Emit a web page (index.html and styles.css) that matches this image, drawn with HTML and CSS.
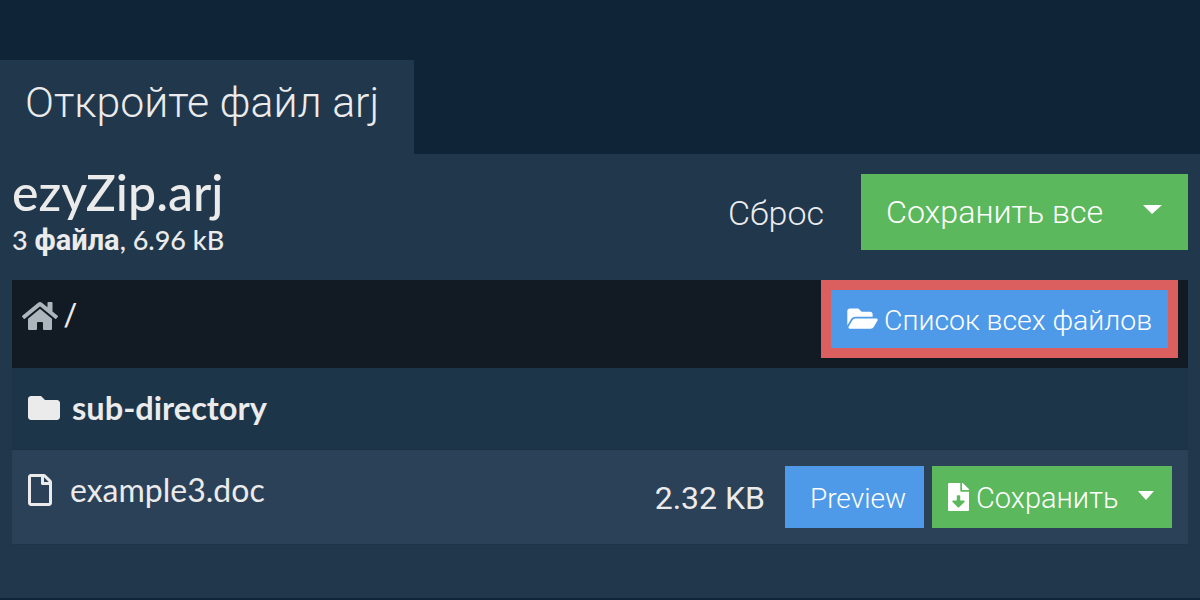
FILE: index.html
```html
<!DOCTYPE html>
<html lang="ru">

<head>
    <meta charset="UTF-8">
    <title>Откройте файл arj</title>
    <link rel="stylesheet" href="styles.css">
</head>

<body>
    <div class="tab">Откройте файл arj</div>
    <div class="panel">
        <div class="head">
            <div class="archive">
                <div class="archive_name">ezyZip.arj</div>
                <div class="archive_info">3 <span class="cyr">файла</span>, 6.96 kB</div>
            </div>
            <div class="head_actions">
                <span class="reset">Сброс</span>
                <div class="btn btn_green btn_save_all">
                    <span>Сохранить все</span>
                    <span class="caret caret_big"></span>
                </div>
            </div>
        </div>
        <div class="path_bar">
            <div class="path">
                <svg class="icon_home" viewBox="0 0 576 512">
                    <path fill="#adb5bd" d="M280.37 148.26L96 300.11V464a16 16 0 0 0 16 16l112.06-.29a16 16 0 0 0 15.92-16V368a16 16 0 0 1 16-16h64a16 16 0 0 1 16 16v95.64a16 16 0 0 0 16 16.05L464 480a16 16 0 0 0 16-16V300L295.67 148.26a12.19 12.19 0 0 0-15.3 0zM571.6 251.47L488 182.56V44.05a12 12 0 0 0-12-12h-56a12 12 0 0 0-12 12v72.61L318.47 43a48 48 0 0 0-61 0L4.34 251.47a12 12 0 0 0-1.6 16.9l25.5 31A12 12 0 0 0 45.15 301l235.22-193.74a12.19 12.19 0 0 1 15.3 0L530.9 301a12 12 0 0 0 16.9-1.6l25.5-31a12 12 0 0 0-1.7-16.93z" />
                </svg>
                <span class="slash">/</span>
            </div>
            <div class="list_outline">
                <div class="btn btn_blue btn_list">
                    <svg class="icon_open" viewBox="0 0 576 512">
                        <path fill="#fff" d="M572.694 292.093L500.27 416.248A63.997 63.997 0 0 1 444.989 448H45.025c-18.523 0-30.064-20.093-20.731-36.093l72.424-124.155A64 64 0 0 1 152 256h399.964c18.523 0 30.064 20.093 20.73 36.093zM152 224h328v-48c0-26.51-21.49-48-48-48H272l-64-64H48C21.49 64 0 85.49 0 112v278.046l69.077-118.418C86.214 242.25 117.989 224 152 224z" />
                    </svg>
                    <span>Список всех файлов</span>
                </div>
            </div>
        </div>
        <div class="folder_row">
            <svg class="icon_folder" viewBox="0 0 512 512">
                <path fill="#ebebeb" d="M464 128H272l-64-64H48C21.49 64 0 85.49 0 112v288c0 26.51 21.49 48 48 48h416c26.51 0 48-21.49 48-48V176c0-26.51-21.49-48-48-48z" />
            </svg>
            <span>sub-directory</span>
        </div>
        <div class="file_row">
            <div class="file_name">
                <svg class="icon_file" viewBox="0 0 384 512">
                    <path fill="#ebebeb" d="M369.9 97.9L286 14C277 5 264.8-.1 252.1-.1H48C21.5 0 0 21.5 0 48v416c0 26.5 21.5 48 48 48h288c26.5 0 48-21.5 48-48V131.9c0-12.7-5.1-25-14.1-34zM332.1 128H256V51.9l76.1 76.1zM48 464V48h160v104c0 13.3 10.7 24 24 24h104v288H48z" />
                </svg>
                <span>example3.doc</span>
            </div>
            <div class="file_actions">
                <span class="file_size">2.32 KB</span>
                <div class="btn btn_blue btn_preview">Preview</div>
                <div class="btn btn_green btn_save">
                    <svg class="icon_download" viewBox="0 0 384 512">
                        <path fill="#fff" d="M224 136V0H24C10.7 0 0 10.7 0 24v464c0 13.3 10.7 24 24 24h336c13.3 0 24-10.7 24-24V160H248c-13.2 0-24-10.8-24-24zm76.45 211.36l-96.42 95.7c-6.65 6.61-17.39 6.61-24.04 0l-96.42-95.7C73.42 337.29 80.54 320 94.82 320H160v-80c0-8.84 7.16-16 16-16h32c8.84 0 16 7.16 16 16v80h65.18c14.28 0 21.4 17.29 11.27 27.36zM377 105L279.1 7c-4.5-4.5-10.6-7-17-7H256v128h128v-6.1c0-6.3-2.5-12.4-7-16.9z" />
                    </svg>
                    <span>Сохранить</span>
                    <span class="caret"></span>
                </div>
            </div>
        </div>
    </div>
</body>

</html>
```

FILE: styles.css
```css
* {
    box-sizing: border-box;
}

html,
body {
    height: 100%;
}

body {
    margin: 0;
    overflow: hidden;
    padding-top: 60px;
    background: #0f2537;
    color: #ebebeb;
    font-family: Lato, Roboto, sans-serif;
}

.tab {
    width: 414px;
    height: 94px;
    padding: 17px 0 0 25px;
    background: #20374c;
    font-family: Roboto, sans-serif;
    font-size: 42.8px;
    font-weight: 300;
    line-height: 50px;
}

.panel {
    height: 444px;
    padding: 0 12px;
    background: #20374c;
}

.head {
    height: 126px;
    display: flex;
    justify-content: space-between;
}

.archive_name {
    padding-top: 11px;
    font-size: 50px;
    font-weight: 500;
    line-height: 54px;
}

.archive_info {
    margin-top: 6px;
    font-size: 27px;
    font-weight: 500;
    line-height: 30px;
}

.cyr {
    font-family: Roboto, sans-serif;
    font-size: 29px;
    font-weight: 700;
}

.head_actions {
    display: flex;
    align-items: flex-start;
    padding-top: 20px;
}

.reset {
    margin-right: 37px;
    font-family: Roboto, sans-serif;
    font-size: 34px;
    font-weight: 300;
    line-height: 78px;
}

.btn {
    display: flex;
    align-items: center;
    color: #fff;
    font-family: Roboto, sans-serif;
    font-weight: 300;
}

.btn_green {
    background: #5cb85c;
}

.btn_blue {
    background: #4e9ae8;
}

.btn_save_all {
    width: 327px;
    height: 76px;
    padding: 0 26px 0 25px;
    justify-content: space-between;
    font-size: 32.2px;
}

.caret {
    width: 0;
    height: 0;
    border-top: 9px solid #fff;
    border-left: 8px solid transparent;
    border-right: 8px solid transparent;
}

.caret_big {
    border-top-width: 9px;
    border-left-width: 9px;
    border-right-width: 10px;
    margin-top: -5px;
}

.path_bar {
    height: 88px;
    padding-right: 10px;
    display: flex;
    justify-content: space-between;
    background: #121a23;
}

.path {
    display: flex;
    align-items: flex-start;
    padding: 20px 0 0 10px;
    font-size: 32px;
    line-height: 28px;
}

.icon_home {
    width: 36px;
    height: 32px;
}

.slash {
    margin-left: 6px;
    font-family: Roboto, sans-serif;
    font-weight: 400;
}

.list_outline {
    height: 78px;
    padding: 10px;
    background: #dc5f5f;
}

.btn_list {
    width: 337px;
    height: 58px;
    padding: 2px 0 0 16px;
    font-size: 28.4px;
}

.icon_open {
    width: 31px;
    height: 27px;
    margin: -3px 6px 0 0;
}

.folder_row {
    height: 82px;
    padding: 0 0 2px 16px;
    display: flex;
    align-items: center;
    background: #1d3549;
    border-bottom: 1px solid #1b3042;
    font-size: 32.6px;
    font-weight: 700;
}

.icon_folder {
    width: 32px;
    height: 32px;
    margin-right: 12px;
}

.file_row {
    height: 95px;
    padding: 16px 16px 0;
    display: flex;
    justify-content: space-between;
    background: #2b4157;
    border-bottom: 1px solid #1f3448;
}

.file_name {
    display: flex;
    align-items: flex-start;
    font-size: 32px;
    line-height: 48px;
}

.icon_file {
    width: 24px;
    height: 32px;
    margin: 8px 18px 0 0;
}

.file_actions {
    display: flex;
    align-items: flex-start;
}

.file_size {
    margin-right: 20px;
    font-family: Roboto, sans-serif;
    font-size: 32px;
    line-height: 64px;
}

.btn_preview {
    width: 139px;
    height: 62px;
    margin-right: 8px;
    padding: 2px 0 0 7px;
    justify-content: center;
    font-size: 28px;
}

.btn_save {
    width: 240px;
    height: 62px;
    padding: 0 18px 0 16px;
    font-size: 29px;
}

.btn_save span:first-of-type {
    padding-top: 2px;
}

.btn_save .caret {
    margin-left: auto;
    margin-top: -4px;
}

.icon_download {
    width: 21px;
    height: 28px;
    margin-right: 7px;
}
```
